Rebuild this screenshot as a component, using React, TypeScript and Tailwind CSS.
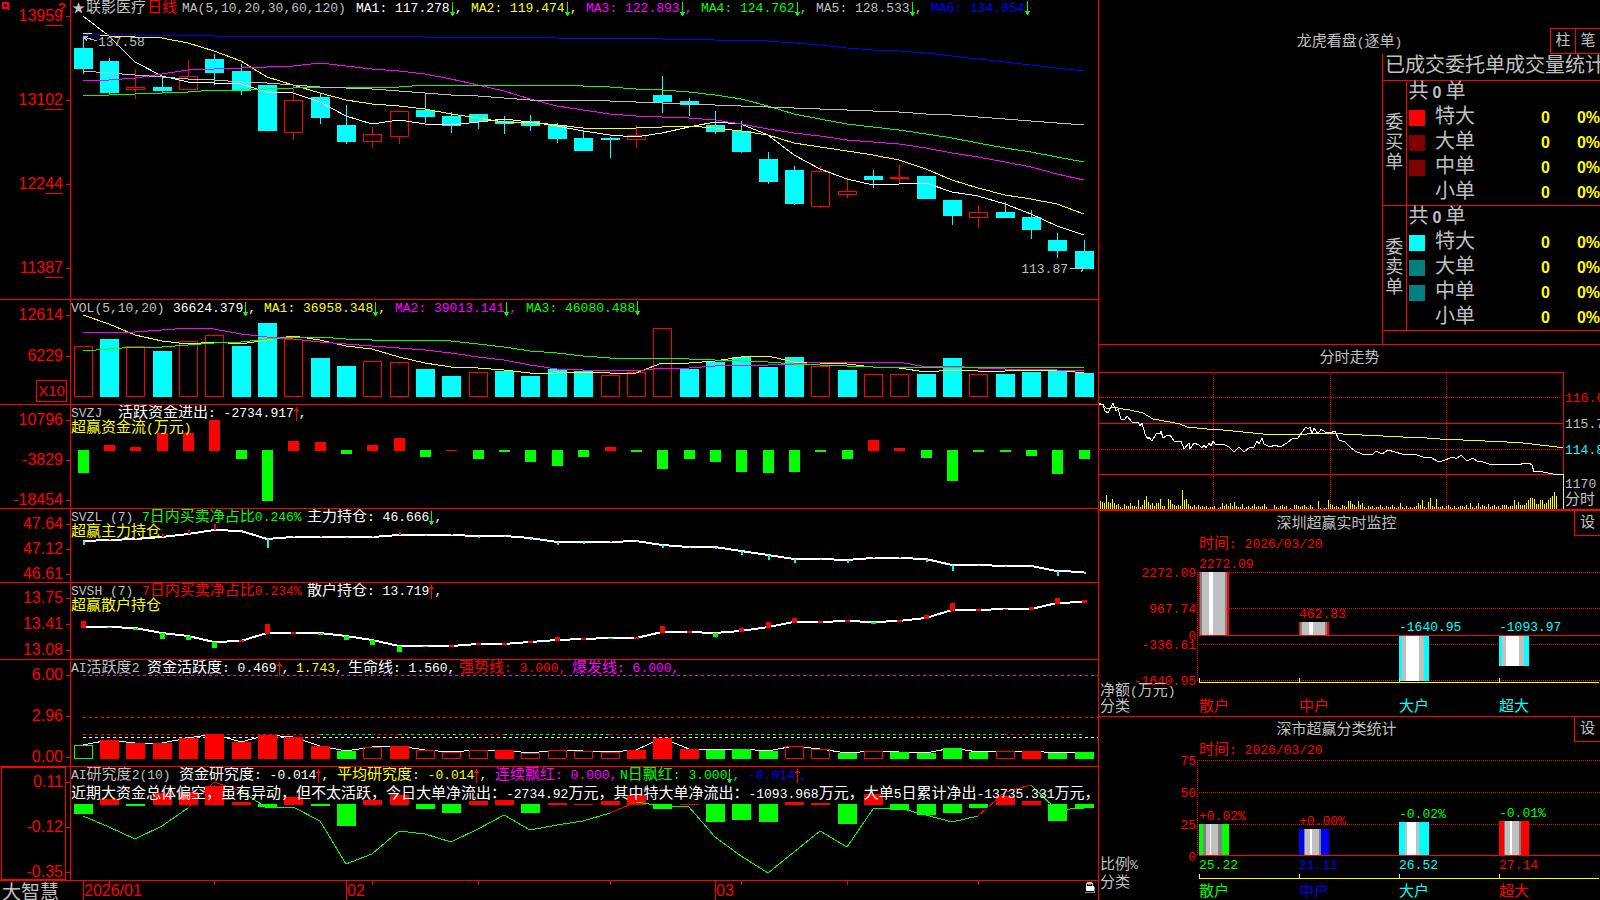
import type { ReactNode } from "react";

const MONO = "font-['Liberation_Mono','Noto_Sans_CJK_SC',monospace]";

const COLORS = {
    red: "text-[#ff0000]",
    green: "text-[#00ff00]",
    cyan: "text-[#00ffff]",
    yellow: "text-[#ffff00]",
    magenta: "text-[#ff00ff]",
    blue: "text-[#0000ff]",
    gray: "text-[#c0c0c0]",
    white: "text-white",
};
type Color = keyof typeof COLORS;

const RED = "#ff0000";
const GREEN = "#00ff00";
const CYAN = "#00ffff";
const YELLOW = "#ffff00";
const MAGENTA = "#ff00ff";
const BLUE = "#0000ff";
const GRAY = "#c0c0c0";

// ---------- series (one entry per trading day) ----------

// [high, body top, body bottom, low, up]
const candles: [number, number, number, number, 0 | 1][] = [
    [36, 48, 69, 74, 0], [58, 61, 93, 95, 0], [69, 87, 90, 99, 1], [77, 87, 91, 93, 0],
    [60, 76, 90, 90, 1], [54, 59, 73, 85, 0], [64, 71, 91, 95, 0], [85, 85, 131, 131, 0],
    [85, 100, 133, 140, 1], [94, 97, 118, 124, 0], [105, 125, 142, 144, 0], [127, 134, 142, 148, 1],
    [111, 111, 137, 144, 1], [94, 110, 117, 123, 0], [112, 116, 126, 133, 0], [114, 114, 122, 129, 0],
    [116, 121, 124, 134, 0], [115, 121, 126, 131, 0], [123, 125, 139, 143, 0], [130, 138, 151, 151, 0],
    [137, 138, 140, 158, 0], [125, 135, 140, 148, 1], [76, 95, 102, 113, 0], [98, 101, 105, 116, 0],
    [111, 125, 132, 134, 0], [121, 131, 152, 153, 0], [152, 159, 182, 184, 0], [166, 170, 204, 205, 0],
    [166, 171, 207, 208, 1], [177, 191, 195, 198, 1], [170, 176, 180, 188, 0], [165, 177, 179, 184, 1],
    [176, 176, 199, 199, 0], [200, 200, 216, 225, 0], [205, 212, 218, 228, 1], [202, 212, 218, 218, 0],
    [210, 217, 230, 239, 0], [233, 240, 251, 258, 0], [240, 251, 269, 269, 0],
];

const ma1 = [16, 36, 62, 76, 82, 83, 84, 92, 93, 102, 116, 124, 120, 124, 125, 122, 119, 122, 126, 131, 135, 137, 133, 127, 122, 124, 135, 155, 169, 179, 185, 184, 183, 192, 196, 204, 214, 226, 235];
const ma2 = [33, 36, 37, 38, 43, 51, 61, 77, 85, 93, 100, 104, 106, 109, 114, 118, 122, 122, 125, 128, 128, 128, 127, 126, 128, 131, 135, 143, 147, 151, 155, 160, 169, 180, 188, 195, 199, 204, 214];
const ma3 = [81, 80, 78, 74, 70, 69, 68, 67, 66, 63, 66, 69, 71, 74, 79, 85, 91, 99, 106, 110, 114, 116, 117, 118, 120, 124, 129, 133, 136, 140, 142, 144, 148, 153, 157, 162, 167, 174, 180];
const ma4 = [95, 95, 94, 93, 92, 90, 90, 89, 88, 87, 87, 87, 87, 85, 85, 85, 85, 85, 85, 86, 87, 89, 90, 92, 95, 99, 106, 114, 119, 124, 127, 130, 134, 138, 143, 148, 152, 157, 162];
const ma5 = [71, 73, 75, 77, 79, 80, 82, 83, 85, 87, 88, 89, 91, 93, 95, 96, 98, 100, 100, 100, 101, 102, 103, 104, 105, 106, 107, 108, 109, 110, 111, 112, 114, 115, 117, 119, 121, 123, 125];
const ma6 = [34, 34, 35, 35, 35, 36, 36, 36, 36, 36, 36, 36, 36, 37, 37, 37, 37, 37, 38, 38, 38, 38, 39, 39, 40, 40, 41, 43, 45, 48, 50, 51, 53, 56, 59, 62, 65, 68, 71];

const volume = [346, 339, 346, 351, 341, 335, 346, 323, 339, 358, 366, 361, 362, 369, 376, 372, 371, 376, 369, 371, 375, 372, 328, 369, 362, 357, 367, 357, 366, 370, 374, 374, 374, 358, 374, 374, 372, 370, 373];
const volumeUp = [0, 2, 4, 5, 8, 11, 12, 15, 20, 21, 22, 28, 30, 31, 34];
const vma1 = [315, 324, 335, 341, 344, 342, 344, 340, 336, 340, 346, 349, 357, 363, 367, 368, 370, 373, 373, 372, 373, 373, 363, 363, 361, 357, 356, 362, 363, 364, 367, 368, 372, 370, 371, 371, 370, 370, 373];
const vma2 = [333, 332, 332, 330, 328, 329, 334, 337, 339, 342, 344, 346, 348, 350, 353, 357, 360, 365, 369, 370, 370, 371, 368, 368, 366, 365, 365, 364, 362, 362, 362, 362, 367, 366, 368, 369, 369, 370, 371];
const vma3 = [351, 349, 347, 347, 345, 343, 342, 339, 337, 337, 339, 340, 340, 340, 341, 344, 347, 351, 353, 356, 358, 359, 358, 359, 360, 361, 362, 364, 365, 366, 367, 367, 367, 367, 367, 367, 367, 367, 367];

const flow = [-23, 6, 4, 18, 18, 31, -9, -51, 10, 9, -4, 6, 13, -7, 1, -9, -2, -12, -16, -7, 4, -2, -19, -9, -12, -22, -23, -22, -2, -9, 11, 3, -8, -31, -2, -2, -6, -24, -9];

const mainHold = [541, 540, 539, 537, 534, 530, 531, 539, 537, 537, 537, 537, 535, 535, 535, 536, 536, 538, 542, 542, 542, 541, 545, 547, 547, 551, 555, 559, 559, 560, 558, 558, 559, 565, 565, 566, 566, 571, 572];
const mainDelta = [-4, 1, 1, 3, 4, 6, -1, -9, 1, 1, -1, 1, 3, -1, 1, -2, -1, -2, -3, -2, 1, -1, -3, -1, -2, -4, -5, -4, -1, -3, 1, 1, -3, -6, -1, -1, -1, -5, -2];

const retailHold = [627, 627, 628, 633, 636, 642, 641, 633, 633, 633, 636, 640, 646, 646, 646, 644, 644, 642, 640, 639, 638, 638, 632, 632, 633, 631, 627, 622, 622, 621, 622, 621, 618, 610, 610, 609, 609, 603, 602];
const retailDelta = [7, -1, -2, -6, -4, -6, 2, 10, 2, -2, -4, -5, -6, -1, 2, 2, 2, 2, 4, 2, -1, 2, 7, 2, -4, 4, 6, 5, 2, 2, -2, 2, 4, 8, 2, 1, 3, 6, 3];

const activity = [745, 740, 743, 743, 738, 734, 742, 735, 737, 746, 751, 747, 746, 750, 752, 750, 750, 753, 750, 751, 752, 750, 738, 749, 750, 749, 751, 746, 749, 753, 751, 752, 753, 748, 752, 751, 751, 753, 752];
// G hollow green, g solid green, r solid red, h hollow red
const activityKind = "Grrrrrrrrrghrhhhrhhhhrrrggghhghgggghrgg";

const study = [-10, 6, -2, 12, 13, 19, 3, -3, 8, -2, -22, 5, 10, -5, -9, 4, 5, -9, 2, 1, 4, 10, -5, 1, -18, -16, -18, 3, 2, -20, 11, -6, -11, -9, -4, 9, 4, -17, -4];
const studyLine = [816, 827, 839, 826, 808, 782, 791, 808, 807, 821, 864, 854, 831, 834, 842, 829, 815, 830, 825, 821, 813, 802, 806, 807, 837, 856, 873, 852, 831, 847, 809, 808, 815, 822, 816, 792, 785, 810, 808];

const tickPrice = "0,33 4,32 6,39 9,41 14,31 17,39 19,37 22,47 26,47 28,44 33,50 39,50 41,54 43,51 46,62 49,67 50,65 53,69 57,62 59,61 61,62 62,59 64,66 67,64 71,63 75,69 78,70 82,69 85,77 90,71 91,77 95,71 100,73 103,76 105,73 107,76 110,71 112,74 114,69 116,72 124,72 130,75 135,80 140,75 145,80 151,75 155,75 158,69 160,72 163,66 165,72 171,75 176,73 181,75 188,71 194,66 199,66 203,60 204,59 207,55 209,57 211,55 213,62 215,56 219,62 222,57 226,60 231,61 236,59 240,68 246,70 251,75 256,79 263,82 274,82 277,79 283,82 289,78 303,82 318,83 324,85 331,85 340,90 346,88 351,86 355,85 357,87 362,83 368,89 374,86 378,89 384,90 393,93 398,92 404,93 409,92 421,93 424,91 427,92 430,91 433,93 435,100 439,99 444,100 454,102 464,102";
const tickAverage = "0,31 4,33 8,37 14,35 24,37 31,38 44,41 54,47 71,50 81,52 88,55 108,57 124,58 144,60 164,62 208,62 218,61 244,62 263,63 304,65 328,66 341,67 364,68 386,69 408,70 424,71 441,73 458,75 464,76";
const tickVolume = [
    8, 7, 6, 14, 7, 6, 10, 6, 4, 5, 2, 1, 5, 3, 3, 6, 3, 3, 2, 9, 2, 4, 9, 13, 7, 4, 6, 3, 6, 6, 10, 3, 3, 0, 10, 9, 5, 4, 3, 4,
    3, 19, 9, 10, 5, 3, 2, 4, 2, 4, 2, 3, 2, 3, 1, 2, 2, 3, 0, 1, 2, 6, 3, 5, 3, 6, 3, 7, 3, 2, 2, 5, 1, 2, 3, 1, 3, 5, 2, 3,
    2, 3, 5, 2, 0, 0, 0, 4, 2, 1, 3, 4, 2, 3, 0, 1, 0, 4, 4, 3, 2, 3, 4, 2, 1, 4, 2, 0, 0, 8, 1, 0, 1, 1, 9, 5, 4, 2, 3, 2,
    1, 4, 3, 2, 8, 8, 5, 4, 2, 8, 4, 6, 2, 1, 3, 2, 3, 1, 2, 2, 4, 2, 1, 3, 2, 2, 4, 2, 1, 2, 6, 2, 1, 3, 1, 2, 1, 2, 3, 6,
    4, 9, 2, 1, 7, 11, 3, 2, 10, 2, 2, 3, 1, 3, 4, 2, 1, 3, 1, 2, 3, 3, 2, 4, 1, 6, 2, 1, 3, 6, 2, 4, 3, 2, 5, 2, 3, 4, 2, 3,
    1, 4, 4, 4, 2, 3, 3, 9, 4, 7, 4, 4, 4, 6, 9, 11, 11, 10, 5, 5, 9, 9, 5, 6, 9, 11, 13, 17, 13,
];

// ---------- helpers ----------

const barX = (i: number) => Math.floor(74 + 26.35 * i);
const midX = (i: number) => barX(i) + 9;
const toPoints = (ys: number[], from = 0) => ys.map((y, i) => `${midX(i + from)},${y}`).join(" ");

const split = (text: string) => text.split(/([\u3000-\u9fff\uff00-\uffef]+)/).filter(Boolean);
const sizeOf = (part: string) => (part.charCodeAt(0) > 0x2fff ? "text-[15px]" : "text-[13px]");

function Label({ children }: { children: string }) {
    return split(children).map((part, i) => (
        <span key={i} className={sizeOf(part)}>{part}</span>
    ));
}

function SvgLabel({ x, y, fill, end, children }: { x: number; y: number; fill: string; end?: boolean; children: string }) {
    return (
        <text x={x} y={y} fill={fill} textAnchor={end ? "end" : "start"}>
            {split(children).map((part, i) => (
                <tspan key={i} className={sizeOf(part)}>{part}</tspan>
            ))}
        </text>
    );
}

function Line({ points, color, width = 1 }: { points: string; color: string; width?: number }) {
    return <polyline points={points} fill="none" stroke={color} strokeWidth={width} />;
}

function Arrow({ up }: { up?: boolean }) {
    return (
        <svg viewBox="0 0 5 14" className="h-[14px] w-[5px] shrink-0" shapeRendering="crispEdges" aria-hidden="true">
            {up ? (
                <path d="M2 0h1v14h-1zM1 2h3v1h-3zM0 3h5v1h-5z" fill={RED} />
            ) : (
                <path d="M2 0h1v14h-1zM0 10h5v1h-5zM1 11h3v2h-3z" fill={GREEN} />
            )}
        </svg>
    );
}

function Item({ color, width = "", arrow, children }: { color: Color; width?: string; arrow?: "up" | "down"; children: string }) {
    return (
        <span className={`flex h-[15px] shrink-0 items-center ${COLORS[color]} ${width}`}>
            <span><Label>{children}</Label></span>
            {arrow && (
                <>
                    <Arrow up={arrow === "up"} />
                    <span className="text-[13px]">,</span>
                </>
            )}
        </span>
    );
}

type PanelProps = {
    top: number;
    height: number;
    size: string;
    axis: ReactNode;
    chart: ReactNode;
    children: ReactNode;
};

function Panel({ top, height, size, axis, chart, children }: PanelProps) {
    return (
        <section className={`flex border-b border-[#ff0000] ${size}`}>
            <div className="relative w-[71px] shrink-0 border-r border-[#ff0000]">{axis}</div>
            <div className="relative min-w-0 flex-1 overflow-hidden">
                <svg
                    className="absolute inset-0 h-full w-full"
                    viewBox={`71 ${top} 1027 ${height}`}
                    preserveAspectRatio="none"
                    shapeRendering="crispEdges"
                    aria-hidden="true"
                >
                    {chart}
                </svg>
                <div className="relative pt-px leading-[15px] whitespace-pre">{children}</div>
            </div>
        </section>
    );
}

function Axis({ labels, className, marked }: { labels: string[]; className: string; marked?: boolean }) {
    return (
        <div className={`flex flex-col font-['Liberation_Sans',sans-serif] text-[16px] leading-5 text-[#ff0000] ${className}`}>
            {labels.map((label) => (
                <div key={label} className="flex h-5 items-center justify-end gap-[3px]">
                    <span>
                        {marked ? (
                            <>
                                {label.slice(0, -2)}
                                <span className="underline underline-offset-4">{label.slice(-2)}</span>
                            </>
                        ) : (
                            label
                        )}
                    </span>
                    <span className="h-px w-1 bg-[#ff0000]" />
                </div>
            ))}
        </div>
    );
}

function Bar({ x, y, width, height, color, hollow }: { x: number; y: number; width: number; height: number; color: string; hollow?: boolean }) {
    if (!hollow || height < 3) {
        return <rect x={x} y={y} width={width} height={height} fill={color} />;
    }
    const d = `M${x} ${y}h${width}v${height}h${-width}zM${x + 1} ${y + 1}v${height - 2}h${width - 2}v${2 - height}z`;
    return <path d={d} fill={color} fillRule="evenodd" />;
}

// ---------- left column ----------

function PriceChart() {
    return (
        <>
            {candles.map(([high, top, bottom, low, up], i) => (
                <g key={i}>
                    <rect x={midX(i)} y={high} width={1} height={top - high} fill={up ? RED : CYAN} />
                    <rect x={midX(i)} y={bottom} width={1} height={low - bottom} fill={up ? RED : CYAN} />
                    <Bar x={barX(i)} y={top} width={19} height={bottom - top} color={up ? RED : CYAN} hollow={up === 1} />
                </g>
            ))}
            <Line points={toPoints(ma1)} color="#ffffff" />
            <Line points={toPoints(ma2)} color={YELLOW} />
            <Line points={toPoints(ma3)} color={MAGENTA} />
            <Line points={toPoints(ma4)} color={GREEN} />
            <Line points={toPoints(ma5)} color={GRAY} />
            <Line points={toPoints(ma6)} color={BLUE} />
            <Line points="97,41 84,37 88,36" color={GRAY} />
            <Line points="84,37 87,41" color={GRAY} />
            <Line points="1070,268 1084,268" color={GRAY} />
            <Line points="1081,265 1084,268 1081,272" color={GRAY} />
        </>
    );
}

function VolumeChart() {
    return (
        <>
            {volume.map((y, i) => {
                const up = volumeUp.includes(i);
                return <Bar key={i} x={barX(i)} y={y} width={19} height={397 - y} color={up ? RED : CYAN} hollow={up} />;
            })}
            <Line points={toPoints(vma1)} color={YELLOW} />
            <Line points={toPoints(vma2)} color={MAGENTA} />
            <Line points={toPoints(vma3)} color={GREEN} />
        </>
    );
}

function ActivityChart() {
    // [from, to, color] of the signal line
    const signal: [number, number, string][] = [
        [0, 9, RED], [9, 11, GREEN], [11, 12, RED], [12, 15, GREEN], [15, 16, RED],
        [16, 20, GREEN], [20, 23, RED], [23, 35, GREEN], [35, 36, RED], [36, 38, GREEN],
    ];
    return (
        <>
            <g strokeDasharray="3 3">
                <line x1={83} y1={675} x2={1098} y2={675} stroke={MAGENTA} />
                <line x1={83} y1={717} x2={1098} y2={717} stroke={RED} />
                <line x1={83} y1={737} x2={1098} y2={737} stroke="#ffffff" />
                {signal.map(([from, to, color]) => (
                    <line key={from} x1={midX(from)} y1={734} x2={midX(to)} y2={734} stroke={color} />
                ))}
            </g>
            <Line points={toPoints(activity)} color="#ffffff" />
            {activity.map((y, i) => {
                const kind = activityKind[i];
                const color = kind === "g" || kind === "G" ? GREEN : RED;
                return <Bar key={i} x={barX(i)} y={y} width={19} height={759 - y} color={color} hollow={kind === "G" || kind === "h"} />;
            })}
        </>
    );
}

function StudyChart() {
    return (
        <>
            {study.map((v, i) => (
                <Bar key={i} x={barX(i)} y={v > 0 ? 805 - v : 804} width={19} height={Math.abs(v)} color={v > 0 ? RED : GREEN} />
            ))}
            <Line points={toPoints(studyLine)} color={GREEN} />
            <Line points={toPoints(studyLine.slice(4, 7), 4)} color={RED} />
            <Line points={toPoints(studyLine.slice(20, 22), 20)} color={RED} />
            <Line points={toPoints(studyLine.slice(34, 37), 34)} color={RED} />
        </>
    );
}

function Timeline() {
    return (
        <footer className="flex h-[19px] text-[#ff0000]">
            <div className="w-[71px] shrink-0 pl-0.5 font-['Noto_Sans_CJK_SC',sans-serif] text-[19px] leading-[19px] text-[#c0c0c0]">
                大智慧
            </div>
            <div className="relative flex min-w-0 flex-1 pl-[13px] font-['Liberation_Sans',sans-serif] text-[16px] leading-[19px]">
                <svg
                    className="absolute inset-0 h-full w-full"
                    viewBox="71 0 1027 19"
                    preserveAspectRatio="none"
                    shapeRendering="crispEdges"
                    aria-hidden="true"
                >
                    {[0, 10, 24].map((i) => (
                        <rect key={i} x={midX(i)} y={0} width={1} height={19} fill={RED} />
                    ))}
                    {[1, 5, 11, 15, 20, 25, 29, 34].map((i) => (
                        <rect key={i} x={midX(i)} y={0} width={1} height={4} fill={RED} />
                    ))}
                </svg>
                <span className="w-[263px]">2026/01</span>
                <span className="w-[369px]">02</span>
                <span>03</span>
                <svg viewBox="0 0 10 12" className="mt-px mr-[3px] ml-auto h-3 w-[10px]" shapeRendering="crispEdges" role="img" aria-label="锁定">
                    <path d="M2 0h5v1h1v3h-1v-2h-5v2h-1v-3h1z" fill="#c0c0c0" />
                    <path d="M3 2h3v1h-3zM9 5h1v6h-10v-1h9z" fill="#808080" />
                    <rect y={4} width={8} height={5} x={1} fill="#ffffff" />
                </svg>
            </div>
        </footer>
    );
}

function MainColumn() {
    return (
        <main className="flex min-w-0 flex-col overflow-hidden border-r border-[#ff0000]">
            <Panel
                top={0}
                height={299}
                size="min-h-[300px] flex-1"
                axis={
                    <>
                        <Axis labels={["13959", "13102", "12244", "11387"]} className="h-full justify-between pt-1.5 pb-[21px]" marked />
                        <svg viewBox="0 0 8 8" className="absolute top-0.5 left-0.5 h-2 w-2" shapeRendering="crispEdges" aria-hidden="true">
                            <path d="M0 0h7v7h-7zM2 2v3h3v-3zM6 7h2v1h-2z" fill={RED} fillRule="evenodd" />
                        </svg>
                        <span className="absolute top-0 right-1 font-['Liberation_Sans',sans-serif] text-[13px] leading-4 font-bold text-[#ff0000]">?</span>
                    </>
                }
                chart={<PriceChart />}
            >
                <h1 className="flex pl-px">
                    <span className="w-[14px] shrink-0 text-[13px] text-[#c0c0c0]">★</span>
                    <Item color="gray" width="w-[61px]">联影医疗</Item>
                    <Item color="red" width="w-[35px]">日线</Item>
                    <Item color="gray" width="w-[174px]">MA(5,10,20,30,60,120)</Item>
                    <Item color="white" width="w-[115px]" arrow="down">MA1: 117.278</Item>
                    <Item color="yellow" width="w-[115px]" arrow="down">MA2: 119.474</Item>
                    <Item color="magenta" width="w-[115px]" arrow="down">MA3: 122.893</Item>
                    <Item color="green" width="w-[115px]" arrow="down">MA4: 124.762</Item>
                    <Item color="gray" width="w-[115px]" arrow="down">MA5: 128.533</Item>
                    <Item color="blue">MA6: 134.054</Item>
                    <Arrow />
                </h1>
                <span className="absolute top-[35px] left-[27px] text-[13px] text-[#c0c0c0]">137.58</span>
                <span className="absolute top-[262px] right-[30px] text-[13px] text-[#c0c0c0]">113.87</span>
            </Panel>

            <Panel
                top={300}
                height={104}
                size="h-[105px]"
                axis={
                    <>
                        <Axis labels={["12614", "6229"]} className="gap-[21px] pt-[5px]" />
                        <div className="mt-[14px] mr-[3px] ml-auto w-[31px] border border-[#ff0000] text-center font-['Liberation_Sans',sans-serif] text-[15px] leading-5 text-[#ff0000]">
                            X10
                        </div>
                    </>
                }
                chart={<VolumeChart />}
            >
                <div className="flex">
                    <Item color="gray" width="w-[102px]">VOL(5,10,20)</Item>
                    <Item color="white" width="w-[91px]" arrow="down">36624.379</Item>
                    <Item color="yellow" width="w-[131px]" arrow="down">MA1: 36958.348</Item>
                    <Item color="magenta" width="w-[131px]" arrow="down">MA2: 39013.141</Item>
                    <Item color="green">MA3: 46080.488</Item>
                    <Arrow />
                </div>
            </Panel>

            <Panel
                top={405}
                height={103}
                size="h-[104px]"
                axis={<Axis labels={["10796", "-3829", "-18454"]} className="gap-5 pt-[5px]" />}
                chart={flow.map((v, i) => (
                    <Bar key={i} x={barX(i) + 4} y={v > 0 ? 451 - v : 450} width={11} height={Math.abs(v)} color={v > 0 ? RED : GREEN} />
                ))}
            >
                <div className="flex">
                    <Item color="gray" width="w-[47px]">SVZJ</Item>
                    <Item color="white" arrow="up">活跃资金进出: -2734.917</Item>
                </div>
                <Item color="yellow">超赢资金流(万元)</Item>
            </Panel>

            <Panel
                top={509}
                height={73}
                size="h-[74px]"
                axis={<Axis labels={["47.64", "47.12", "46.61"]} className="gap-[5px] pt-[5px]" />}
                chart={
                    <>
                        <Line points={toPoints(mainHold)} color="#ffffff" width={2} />
                        {mainDelta.map((v, i) => (
                            <Bar key={i} x={midX(i)} y={v > 0 ? mainHold[i] - v : mainHold[i]} width={2} height={Math.abs(v)} color={v > 0 ? RED : CYAN} />
                        ))}
                    </>
                }
            >
                <div className="flex">
                    <Item color="gray" width="w-[71px]">SVZL (7)</Item>
                    <Item color="green" width="w-[165px]">7日内买卖净占比0.246%</Item>
                    <Item color="white" arrow="down">主力持仓: 46.666</Item>
                </div>
                <Item color="yellow">超赢主力持仓</Item>
            </Panel>

            <Panel
                top={583}
                height={76}
                size="h-[77px]"
                axis={<Axis labels={["13.75", "13.41", "13.08"]} className="gap-[6px] pt-[5px]" />}
                chart={
                    <>
                        <Line points={toPoints(retailHold)} color="#ffffff" width={2} />
                        {retailDelta.map((v, i) => (
                            <Bar key={i} x={midX(i) - 2} y={v > 0 ? retailHold[i] + 1 - v : retailHold[i]} width={5} height={Math.abs(v)} color={v > 0 ? RED : GREEN} />
                        ))}
                    </>
                }
            >
                <div className="flex">
                    <Item color="gray" width="w-[71px]">SVSH (7)</Item>
                    <Item color="red" width="w-[165px]">7日内买卖净占比0.234%</Item>
                    <Item color="white" arrow="up">散户持仓: 13.719</Item>
                </div>
                <Item color="yellow">超赢散户持仓</Item>
            </Panel>

            <Panel
                top={660}
                height={106}
                size="h-[107px]"
                axis={<Axis labels={["6.00", "2.96", "0.00"]} className="gap-[21px] pt-[5px]" />}
                chart={<ActivityChart />}
            >
                <div className="flex">
                    <Item color="gray" width="w-[76px]">AI活跃度2</Item>
                    <Item color="white" width="w-[149px]" arrow="up">资金活跃度: 0.469</Item>
                    <Item color="yellow" width="w-[52px]">1.743,</Item>
                    <Item color="white" width="w-[111px]">生命线: 1.560,</Item>
                    <Item color="red" width="w-[113px]">强势线: 3.000,</Item>
                    <Item color="magenta">爆发线: 6.000,</Item>
                </div>
            </Panel>

            <Panel
                top={767}
                height={113}
                size="h-[114px]"
                axis={
                    <>
                        <Axis labels={["0.11", "-0.12", "-0.35"]} className="gap-[25px] pt-[5px]" />
                        <div className="absolute inset-y-0 right-1 left-px border border-[#ff0000]" />
                    </>
                }
                chart={<StudyChart />}
            >
                <div className="flex">
                    <Item color="gray" width="w-[108px]">AI研究度2(10)</Item>
                    <Item color="white" width="w-[158px]" arrow="up">资金研究度: -0.014</Item>
                    <Item color="yellow" width="w-[158px]" arrow="up">平均研究度: -0.014</Item>
                    <Item color="magenta" width="w-[125px]">连续飘红: 0.000,</Item>
                    <Item color="green" width="w-[128px]" arrow="down">N日飘红: 3.000</Item>
                    <Item color="blue" arrow="up">-0.014</Item>
                </div>
                <p className="mt-1 leading-[15px] text-white">
                    <Label>近期大资金总体偏空，虽有异动，但不太活跃，今日大单净流出：-2734.92万元，其中特大单净流出：-1093.968万元，大单5日累计净出-13735.331万元，</Label>
                </p>
            </Panel>

            <Timeline />
        </main>
    );
}

// ---------- right column ----------

function SmallButton({ width = "w-[25px]", children }: { width?: string; children: string }) {
    return (
        <button type="button" className={`h-[26px] shrink-0 border border-r-0 border-[#ff0000] pt-px text-[15px] leading-[23px] text-[#c0c0c0] ${width}`}>
            {children}
        </button>
    );
}

const orderGroups = [
    { side: "委买单", swatches: ["bg-[#ff0000]", "bg-[#800000]", "bg-[#800000]", ""] },
    { side: "委卖单", swatches: ["bg-[#00ffff]", "bg-[#008080]", "bg-[#008080]", ""] },
];
const orderSizes = ["特大", "大单", "中单", "小单"];
const figure = "p-0 text-right font-['Liberation_Sans',sans-serif] text-[16px] font-bold text-[#ffff00]";

function OrderPanel() {
    return (
        <section className="flex h-[345px] flex-col border-b border-[#ff0000]">
            <div className="mt-7 flex h-[26px] items-center">
                <h2 className="flex-1 pt-0.5 pl-[50px] text-center text-[#c0c0c0]">
                    <Label>龙虎看盘(逐单)</Label>
                </h2>
                <SmallButton>柱</SmallButton>
                <SmallButton>笔</SmallButton>
            </div>
            <div className="ml-auto w-[218px] flex-1 border-l border-[#ff0000] text-[20px] text-[#c0c0c0]">
                <h3 id="orders" className="h-[26px] pl-0.5 leading-[26px] whitespace-nowrap">已成交委托单成交量统计</h3>
                <table aria-labelledby="orders" className="w-full table-fixed border-collapse leading-6">
                    <colgroup>
                        <col className="w-[23px]" />
                        <col className="w-[26px]" />
                        <col className="w-[50px]" />
                        <col className="w-[68px]" />
                        <col className="w-[50px]" />
                    </colgroup>
                    {orderGroups.map((group) => (
                        <tbody key={group.side} className="border-y border-[#ff0000]">
                            <tr className="h-[25px]">
                                <th rowSpan={5} scope="rowgroup" className="border-r border-[#ff0000] px-0.5 text-[18px] leading-5 font-normal">
                                    {group.side}
                                </th>
                                <td colSpan={4} className="p-0 pl-0.5">
                                    共<span className="px-1 font-['Liberation_Sans',sans-serif] text-[16px] font-bold">0</span>单
                                </td>
                            </tr>
                            {orderSizes.map((name, i) => (
                                <tr key={name} className="h-[25px]">
                                    <td className="p-0 pl-0.5">
                                        <div className={`h-4 w-4 ${group.swatches[i]}`} />
                                    </td>
                                    <td className="p-0 pl-[3px]">{name}</td>
                                    <td className={figure}>0</td>
                                    <td className={figure}>0%</td>
                                </tr>
                            ))}
                        </tbody>
                    ))}
                </table>
            </div>
        </section>
    );
}

function IntradayPanel() {
    return (
        <section className="flex h-[166px] flex-col border-b-2 border-[#ff0000] text-[#c0c0c0]">
            <h2 className="h-[27px] text-center leading-[27px]">
                <Label>分时走势</Label>
            </h2>
            <div className="flex flex-1 overflow-hidden">
                <svg
                    className="h-full min-w-0 flex-1"
                    viewBox="0 0 465 137"
                    preserveAspectRatio="none"
                    shapeRendering="crispEdges"
                    role="img"
                    aria-label="分时走势"
                >
                    {[0, 51, 102].map((y) => (
                        <rect key={y} y={y} width={465} height={1} fill={RED} />
                    ))}
                    <rect x={464} width={1} height={137} fill={RED} />
                    <g stroke={RED} strokeDasharray="1 1">
                        <line x1={0} y1={25} x2={464} y2={25} />
                        <line x1={0} y1={77} x2={464} y2={77} />
                        <line x1={114} y1={0} x2={114} y2={137} />
                        <line x1={231} y1={0} x2={231} y2={137} />
                        <line x1={347} y1={0} x2={347} y2={137} />
                    </g>
                    {tickVolume.map((v, i) => (
                        <rect key={i} x={1 + 2 * i} y={137 - v} width={1} height={v} fill={YELLOW} />
                    ))}
                    <rect x={464} y={102} width={1} height={35} fill={YELLOW} />
                    <Line points={tickAverage} color={YELLOW} />
                    <Line points={tickPrice} color="#ffffff" />
                </svg>
                <div className="w-9 pt-[19px] pl-px text-[13px] leading-4">
                    <div className="mb-2.5 text-[#ff0000]">116.6</div>
                    <div className="mb-2.5">115.7</div>
                    <div className="mb-[18px] text-[#00ffff]">114.8</div>
                    <div>1170</div>
                    <div className="text-[15px]">分时</div>
                </div>
            </div>
        </section>
    );
}

type Stripe = [number, string];

const silver = "#c0c0c0";
const dark = "#808080";
const redBar: Stripe[] = [[1, RED], [2, dark], [7, silver], [4, "#ffffff"], [12, silver], [2, dark], [2, RED]];
const cyanBar: Stripe[] = [[3, CYAN], [4, silver], [13, "#ffffff"], [5, silver], [5, CYAN]];
const wideRedBar: Stripe[] = [[5, RED], [1, dark], [5, silver], [2, "#ffffff"], [7, silver], [2, dark], [8, RED]];
const wideBlueBar: Stripe[] = [[5, BLUE], [1, dark], [5, silver], [2, "#ffffff"], [7, silver], [2, dark], [8, BLUE]];
const wideCyanBar: Stripe[] = [[6, CYAN], [2, silver], [9, "#ffffff"], [3, silver], [10, CYAN]];
const wideGreenBar: Stripe[] = [[4, GREEN], [3, dark], [4, silver], [1, "#ffffff"], [7, silver], [4, dark], [7, GREEN]];

function ShadedBar({ x, y, height, stripes }: { x: number; y: number; height: number; stripes: Stripe[] }) {
    return stripes.map(([width, fill], i) => {
        const offset = stripes.slice(0, i).reduce((sum, [w]) => sum + w, 0);
        return <rect key={i} x={x + offset} y={y} width={width} height={height} fill={fill} />;
    });
}

function YellowAxis({ y }: { y: number }) {
    return (
        <>
            <rect x={100} y={y} width={400} height={1} fill={YELLOW} />
            {[100, 200, 300, 400].map((x) => (
                <rect key={x} x={x} y={y - 4} width={1} height={4} fill={YELLOW} />
            ))}
        </>
    );
}

function BarPanel({ title, size, viewHeight, children }: { title: string; size: string; viewHeight: number; children: ReactNode }) {
    return (
        <section className={`flex flex-col ${size}`}>
            <div className="flex h-[25px]">
                <h2 className="flex-1 text-center leading-[26px] text-[#c0c0c0]">
                    <Label>{title}</Label>
                </h2>
                <div className="-mt-px">
                    <SmallButton width="w-[26px]">设</SmallButton>
                </div>
            </div>
            <div className="h-4 pl-[100px] leading-4 text-[#ff0000]">
                <Label>时间: 2026/03/20</Label>
            </div>
            <svg className="w-full overflow-visible" viewBox={`0 0 501 ${viewHeight}`} shapeRendering="crispEdges" role="img" aria-label={title}>
                {children}
            </svg>
        </section>
    );
}

function NetPanel() {
    const bars = [
        { name: "散户", value: "2272.09", color: RED, y: 20, height: 63, labelY: 16, stripes: redBar },
        { name: "中户", value: "462.83", color: RED, y: 70, height: 13, labelY: 66, stripes: redBar },
        { name: "大户", value: "-1640.95", color: CYAN, y: 84, height: 45, labelY: 79, stripes: cyanBar },
        { name: "超大", value: "-1093.97", color: CYAN, y: 84, height: 30, labelY: 79, stripes: cyanBar },
    ];
    return (
        <BarPanel title="深圳超赢实时监控" size="h-[206px] border-b border-[#ff0000]" viewHeight={163}>
            <g stroke={RED} strokeDasharray="1 1">
                {[20, 56, 92, 128].map((y) => (
                    <line key={y} x1={98} y1={y} x2={501} y2={y} />
                ))}
                <line x1={98} y1={20} x2={98} y2={128} />
            </g>
            <rect x={100} y={83} width={401} height={1} fill={RED} />
            <SvgLabel x={97} y={25} fill={RED} end>2272.09</SvgLabel>
            <SvgLabel x={97} y={61} fill={RED} end>967.74</SvgLabel>
            <SvgLabel x={97} y={88} fill={RED} end>0</SvgLabel>
            <SvgLabel x={97} y={97} fill={RED} end>-336.61</SvgLabel>
            <SvgLabel x={97} y={133} fill={RED} end>-1640.95</SvgLabel>
            {bars.map((bar, i) => (
                <g key={bar.name}>
                    <ShadedBar x={100 + 100 * i} y={bar.y} height={bar.height} stripes={bar.stripes} />
                    <SvgLabel x={100 + 100 * i} y={bar.labelY} fill={bar.color}>{bar.value}</SvgLabel>
                    <SvgLabel x={100 + 100 * i} y={159} fill={bar.color}>{bar.name}</SvgLabel>
                </g>
            ))}
            <YellowAxis y={130} />
            <SvgLabel x={1} y={143} fill={GRAY}>净额(万元)</SvgLabel>
            <SvgLabel x={1} y={159} fill={GRAY}>分类</SvgLabel>
        </BarPanel>
    );
}

function SharePanel() {
    const bars = [
        { name: "散户", share: "25.22", change: "+0.02%", color: GREEN, changeColor: RED, y: 66, stripes: wideGreenBar },
        { name: "中户", share: "21.11", change: "+0.00%", color: BLUE, changeColor: RED, y: 71, stripes: wideBlueBar },
        { name: "大户", share: "26.52", change: "-0.02%", color: CYAN, changeColor: GREEN, y: 64, stripes: wideCyanBar },
        { name: "超大", share: "27.14", change: "-0.01%", color: RED, changeColor: GREEN, y: 63, stripes: wideRedBar },
    ];
    return (
        <BarPanel title="深市超赢分类统计" size="flex-1" viewHeight={142}>
            <g stroke={RED} strokeDasharray="1 1">
                {[2, 34, 66].map((y) => (
                    <line key={y} x1={98} y1={y} x2={501} y2={y} />
                ))}
                <line x1={98} y1={2} x2={98} y2={97} />
            </g>
            <rect x={100} y={97} width={401} height={1} fill={RED} />
            {["75", "50", "25", "0"].map((text, i) => (
                <SvgLabel key={text} x={97} y={7 + 32 * i} fill={RED} end>{text}</SvgLabel>
            ))}
            {bars.map((bar, i) => (
                <g key={bar.name}>
                    <ShadedBar x={100 + 100 * i} y={bar.y} height={97 - bar.y} stripes={bar.stripes} />
                    <SvgLabel x={100 + 100 * i} y={bar.y - 4} fill={bar.changeColor}>{bar.change}</SvgLabel>
                    <SvgLabel x={100 + 100 * i} y={111} fill={bar.color}>{bar.share}</SvgLabel>
                    <SvgLabel x={100 + 100 * i} y={138} fill={bar.color}>{bar.name}</SvgLabel>
                </g>
            ))}
            <YellowAxis y={120} />
            <SvgLabel x={1} y={111} fill={GRAY}>比例%</SvgLabel>
            <SvgLabel x={1} y={129} fill={GRAY}>分类</SvgLabel>
        </BarPanel>
    );
}

export default function App() {
    return (
        <div className={`grid min-h-screen grid-cols-[1099fr_501fr] overflow-hidden bg-black ${MONO}`}>
            <MainColumn />
            <aside className="flex min-w-0 flex-col overflow-hidden">
                <OrderPanel />
                <IntradayPanel />
                <NetPanel />
                <SharePanel />
            </aside>
        </div>
    );
}
